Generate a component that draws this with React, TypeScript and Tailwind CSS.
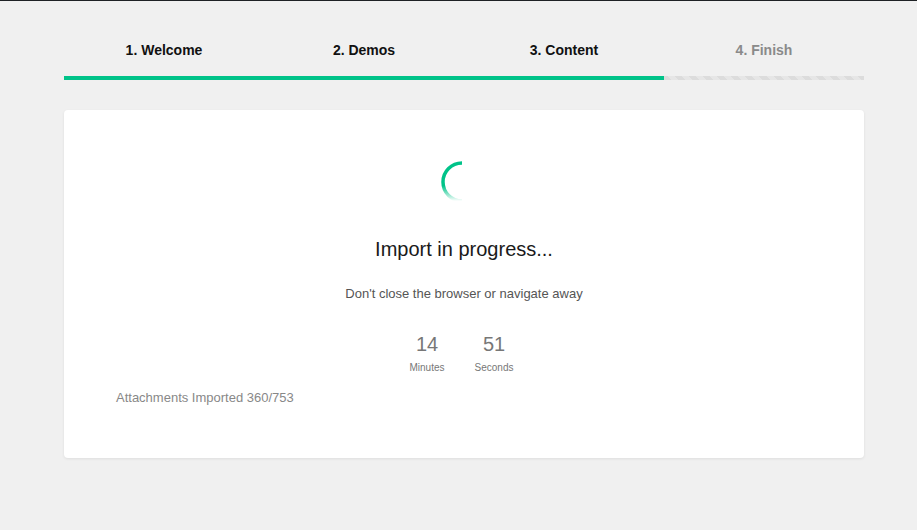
import React from 'react';

const steps = [
    { label: '1. Welcome', done: true },
    { label: '2. Demos', done: true },
    { label: '3. Content', done: true },
    { label: '4. Finish', done: false },
];

const Spinner: React.FC = () => (
    <svg width="44" height="44" viewBox="0 0 44 44" className="-ml-[4px]">
        <defs>
            <linearGradient id="spin" x1="0" y1="0" x2="0" y2="1">
                <stop offset="0%" stopColor="#00c389" />
                <stop offset="60%" stopColor="#00c389" />
                <stop offset="100%" stopColor="#00c389" stopOpacity="0" />
            </linearGradient>
        </defs>
        {/* arc from top, going counter-clockwise to the bottom */}
        <path
            d="M22 3 A19 19 0 0 0 22 41"
            fill="none"
            stroke="url(#spin)"
            strokeWidth="3.5"
        />
    </svg>
);

export default function App() {
    return (
        <div className="min-h-screen bg-[#f0f0f0] border-t border-[#1e2125] font-['Liberation_Sans',Arial,sans-serif]">
            <div className="ml-16 w-[800px]">
                {/* Steps */}
                <div className="grid grid-cols-4 pt-[39px] mb-[16px]">
                    {steps.map((s) => (
                        <div
                            key={s.label}
                            className={`text-center text-sm leading-5 font-bold ${s.done ? 'text-[#111]' : 'text-[#8a8a8a]'}`}
                        >
                            {s.label}
                        </div>
                    ))}
                </div>

                {/* Progress bar */}
                <div className="flex h-1">
                    <div className="w-[600px] bg-[#00c389]" />
                    <div className="flex-1 bg-[repeating-linear-gradient(45deg,#dcdcdc_0,#dcdcdc_5px,#e6e6e6_5px,#e6e6e6_10px)]" />
                </div>

                {/* Card */}
                <div className="mt-[30px] h-[348px] bg-white rounded shadow-[0_1px_3px_rgba(0,0,0,0.08)] pt-[50px] px-[52px]">
                    <div className="flex justify-center">
                        <Spinner />
                    </div>
                    <h1 className="mt-[31px] text-center text-[20px] leading-7 text-[#1a1a1a]">
                        Import in progress...
                    </h1>
                    <p className="mt-[21px] text-center text-[13px] leading-5 text-[#555]">
                        Don't close the browser or navigate away
                    </p>
                    <div className="mt-[28px] flex justify-center pr-[7px]">
                        {[
                            { v: '14', l: 'Minutes' },
                            { v: '51', l: 'Seconds' },
                        ].map((t) => (
                            <div key={t.l} className="w-[67px] text-center">
                                <div className="text-[20px] leading-6 text-[#777]">{t.v}</div>
                                <div className="mt-[5px] text-[10px] leading-[14px] text-[#777]">{t.l}</div>
                            </div>
                        ))}
                    </div>
                    <p className="mt-[13px] text-[13px] leading-5 text-[#888]">Attachments Imported 360/753</p>
                </div>
            </div>
        </div>
    );
}
